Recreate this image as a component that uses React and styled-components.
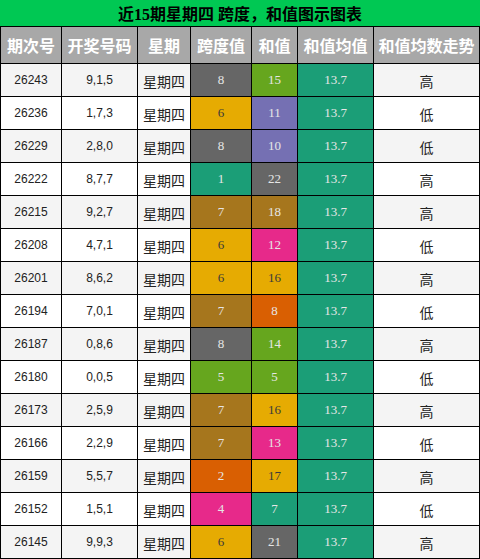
import React from 'react';
import styled, { createGlobalStyle } from "styled-components";

const GlobalStyle = createGlobalStyle`
    body {
        margin: 0;
        background: #ffffff;
        font-family: "Liberation Sans", "Noto Sans CJK SC", sans-serif;
    }
`;

// Dark2 palette
const C = {
    teal: "#1b9e77",
    orange: "#d95f02",
    purple: "#7570b3",
    pink: "#e7298a",
    green: "#66a61e",
    yellow: "#e6ab02",
    brown: "#a6761d",
    gray: "#666666",
};

const spanColor = [C.teal, C.orange, C.purple, C.pink, C.green, C.yellow, C.brown, C.gray];

const rows = [
    ["26243", "9,1,5", 8, 15, C.green, "高"],
    ["26236", "1,7,3", 6, 11, C.purple, "低"],
    ["26229", "2,8,0", 8, 10, C.purple, "低"],
    ["26222", "8,7,7", 1, 22, C.gray, "高"],
    ["26215", "9,2,7", 7, 18, C.brown, "高"],
    ["26208", "4,7,1", 6, 12, C.pink, "低"],
    ["26201", "8,6,2", 6, 16, C.yellow, "高"],
    ["26194", "7,0,1", 7, 8, C.orange, "低"],
    ["26187", "0,8,6", 8, 14, C.green, "高"],
    ["26180", "0,0,5", 5, 5, C.green, "低"],
    ["26173", "2,5,9", 7, 16, C.yellow, "高"],
    ["26166", "2,2,9", 7, 13, C.pink, "低"],
    ["26159", "5,5,7", 2, 17, C.yellow, "高"],
    ["26152", "1,5,1", 4, 7, C.teal, "低"],
    ["26145", "9,9,3", 6, 21, C.gray, "高"],
];

const headers = ["期次号", "开奖号码", "星期", "跨度值", "和值", "和值均值", "和值均数走势"];

const Page = styled.div`
    width: 480px;
`;

const Title = styled.div`
    height: 26px;
    background: #00c853;
    display: flex;
    align-items: center;
    justify-content: center;
    font-family: "Liberation Serif", "Noto Sans CJK SC", serif;
    font-weight: bold;
    font-size: 16px;
    color: #000;
`;

const Grid = styled.div`
    display: grid;
    grid-template-columns: 60px 75px 52px 60px 45px 75px 105px;
    grid-template-rows: 36px;
    grid-auto-rows: 32px;
    gap: 1px;
    padding: 1px;
    background: #000;
`;

const Head = styled.div`
    background: #a8a8a8;
    color: #fff;
    font-weight: bold;
    font-size: 16px;
    font-family: "Noto Sans CJK SC", sans-serif;
    display: flex;
    align-items: center;
    justify-content: center;
`;

const Cell = styled.div`
    background: ${(props) => props.bg};
    display: flex;
    align-items: center;
    justify-content: center;
    color: #222;
    font-size: ${(props) => (props.cjk ? "14px" : "12px")};
    font-family: ${(props) =>
        props.cjk ? `"Noto Sans CJK SC", sans-serif` : `"Liberation Sans", sans-serif`};
    padding-top: ${(props) => (props.cjk ? "2px" : "0")};
`;

const ColorCell = styled.div`
    background: ${(props) => props.bg};
    color: ${(props) => (props.bg === C.yellow ? "#3a3a3a" : "#e6e6e6")};
    display: flex;
    align-items: center;
    justify-content: center;
    font-family: "Liberation Serif", serif;
    font-size: 13px;
`;

function App() {
    return (
        <Page>
            <GlobalStyle />
            <Title>近15期星期四 跨度，和值图示图表</Title>
            <Grid>
                {headers.map((h) => (
                    <Head key={h}>{h}</Head>
                ))}
                {rows.map((r, i) => {
                    const bg = i % 2 === 0 ? "#f4f4f4" : "#ffffff";
                    return (
                        <React.Fragment key={r[0]}>
                            <Cell bg={bg}>{r[0]}</Cell>
                            <Cell bg={bg}>{r[1]}</Cell>
                            <Cell bg={bg} cjk>星期四</Cell>
                            <ColorCell bg={spanColor[(r[2] - 1) % 8]}>{r[2]}</ColorCell>
                            <ColorCell bg={r[4]}>{r[3]}</ColorCell>
                            <ColorCell bg={C.teal}>13.7</ColorCell>
                            <Cell bg={bg} cjk>{r[5]}</Cell>
                        </React.Fragment>
                    );
                })}
            </Grid>
        </Page>
    );
}

export default App;
